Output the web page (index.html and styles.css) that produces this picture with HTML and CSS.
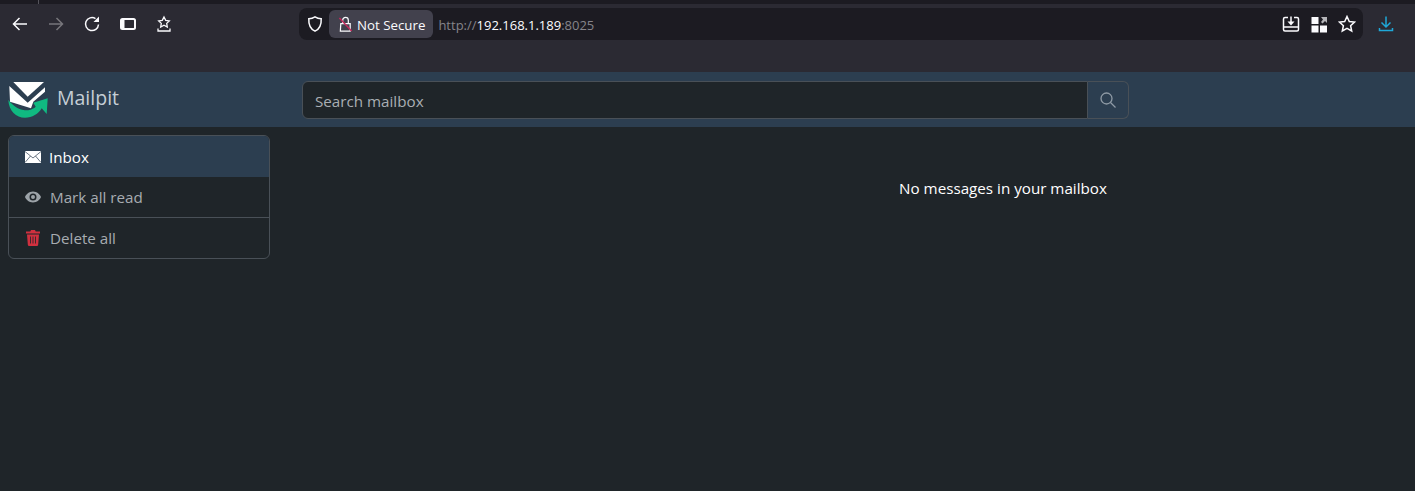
FILE: index.html
```html
<!DOCTYPE html>
<html lang="en">
<head>
    <meta charset="UTF-8">
    <meta name="viewport" content="width=device-width, initial-scale=1.0">
    <title>Mailpit</title>
    <link rel="stylesheet" href="styles.css">
</head>
<body>
    <div class="browser">
        <div class="tab-strip"><div class="tab-edge"></div></div>
        <div class="toolbar">
            <div class="nav-buttons">
                <svg class="tool-icon" viewBox="0 0 18 18"><path d="M16 9H2.500M8.500 3 2.500 9l6 6"/></svg>
                <svg class="tool-icon muted" viewBox="0 0 18 18"><path d="M2 9h13.500M9.500 3l6 6-6 6"/></svg>
                <svg class="tool-icon" viewBox="0 0 18 18"><path d="M15.500 9.500A6.500 6.500 0 1 1 12.500 3.600"/><path class="solid" d="M16 1.500V7h-5.500z"/></svg>
                <svg class="tool-icon thick" viewBox="0 0 18 18"><rect x="2" y="4" width="14" height="10" rx="1.500"/><path class="solid" d="M2 4.500h3.500v9H2z"/></svg>
                <svg class="tool-icon thin" viewBox="0 0 18 18"><path d="m9 2 1.700 3.400 3.600.5-2.600 2.500.6 3.600L9 10.200l-3.300 1.800.6-3.600L3.700 5.900l3.600-.5zM3 13.500V16h12v-2.500"/></svg>
            </div>
            <div class="address-bar">
                <svg class="tool-icon shield" viewBox="0 0 18 18"><path d="M9 1.800c2 1.300 4 1.800 6.200 1.900.3 5.600-1.500 10.200-6.200 12.500C4.300 13.900 2.500 9.300 2.800 3.700 5 3.600 7 3.100 9 1.800z"/></svg>
                <div class="security-chip">
                    <svg class="lock-icon" viewBox="0 0 16 18"><path d="M3 8h10v8H2.500zM5 8V4.500a3 3 0 0 1 6 0V8"/><path class="slash" d="M1.500 2 14.500 16"/></svg>
                    <span class="chip-text">Not Secure</span>
                </div>
                <div class="url"><span class="dim">http://</span>192.168.1.189<span class="dim">:8025</span></div>
                <div class="address-actions">
                    <svg class="tool-icon" viewBox="0 0 18 18"><path d="M6 2.500H3a1.500 1.500 0 0 0-1.500 1.500v10.500A1.500 1.500 0 0 0 3 16h12a1.500 1.500 0 0 0 1.500-1.500V4A1.500 1.500 0 0 0 15 2.500h-3M1.500 12h15M9 1.500v6"/><path class="solid" d="M5.500 6.500h7L9 10.500z"/></svg>
                    <svg class="tool-icon" viewBox="0 0 18 18"><path class="solid" d="M1.500 2h7v7h-7zM1.500 10.500h7v7h-7zM10 10.500h7v7h-7z"/><path class="dim-solid" d="M11 2h6v6l-2-2-2.500 2.500-1.500-1.500L13 4.500z"/></svg>
                    <svg class="tool-icon" viewBox="0 0 18 18"><path d="m9 1.500 2.300 5 5.200.6-3.900 3.600 1.100 5.300L9 13.300 4.300 16l1.100-5.300L1.500 7.100l5.200-.6z"/></svg>
                </div>
            </div>
            <svg class="tool-icon download" viewBox="0 0 18 18"><path d="M9 1.500v10M4.500 7.500 9 12l4.500-4.500M2.500 13v2.500h13V13"/></svg>
        </div>
    </div>

    <nav class="navbar">
        <div class="brand">
            <svg class="logo" viewBox="0 0 41 38">
                <path fill="#fff" d="M5.300 1H36L19.700 15.700z"/>
                <path fill="#fff" d="M1.300 5 19.700 21.700 37 6.300v4.400L25.300 20.700 23 27.300 2 20.700z"/>
                <path fill="#10b981" d="M.3 19c4 5 9 9 15 10 3.500.5 6.500.2 8.400-.7 2.200-1 3.600-2 4-2.600l-2.400-4 14.400-4.400-1 15.700-5-5.700c-3 5.500-9.700 9.400-16.700 9.400C8 36.700 1 30 .3 19z"/>
            </svg>
            <span class="brand-name">Mailpit</span>
        </div>
        <form class="search">
            <input class="search-input" type="text" placeholder="Search mailbox">
            <button class="search-btn" type="button">
                <svg viewBox="0 0 16 16"><circle cx="6.500" cy="6.500" r="5.500"/><path d="m10.500 10.500 5 5"/></svg>
            </button>
        </form>
    </nav>

    <div class="page">
        <aside class="side-menu">
            <a class="menu-item active">
                <svg class="menu-icon" viewBox="0 0 16 12"><rect width="16" height="12" fill="#fff"/><path fill="none" stroke="#2c3e50" stroke-width=".7" d="M0 .5 8 7l8-6.500M0 11.500 5.500 5M16 11.500 10.500 5"/></svg>
                Inbox
            </a>
            <a class="menu-item">
                <svg class="menu-icon" viewBox="0 0 16 12"><path fill="#9ca3a8" fill-rule="evenodd" d="M8 .5C12 .5 15 3.500 16 6c-1 2.500-4 5.500-8 5.500S1 8.500 0 6C1 3.500 4 .5 8 .5zm0 2a3.500 3.500 0 1 0 0 7 3.500 3.500 0 0 0 0-7zm0 1.500a2 2 0 1 1 0 4 2 2 0 0 1 0-4z"/></svg>
                <span class="menu-label">Mark all read</span>
            </a>
            <a class="menu-item divided">
                <svg class="menu-icon" viewBox="0 0 14 16"><path fill="#d0303f" fill-rule="evenodd" d="M5 0h4l.7 1.500H14v2H0v-2h4.300zM1 4.500h12l-.8 10a1.500 1.500 0 0 1-1.500 1.500H3.300a1.500 1.500 0 0 1-1.500-1.500zm3 2v7h.8v-7zm2.600 0v7h.8v-7zm2.600 0v7h.8v-7z"/></svg>
                <span class="menu-label">Delete all</span>
            </a>
        </aside>
        <main class="content">
            <p class="empty-text">No messages in your mailbox</p>
        </main>
    </div>
</body>
</html>
```

FILE: styles.css
```css
html, body {
    height: 100%;
}
body {
    margin: 0;
    background: #1f2529;
    color: #fff;
    font-family: "Open Sans", "Noto Sans", sans-serif;
    font-size: 15.2px;
    overflow: hidden;
}
svg {
    display: block;
}

/* browser chrome */
.browser {
    height: 72px;
    background: #2b2a33;
}
.tab-strip {
    height: 4px;
    background: #1c1b22;
}
.tab-edge {
    width: 38px;
    height: 4px;
    border-right: 1px solid #55545c;
}
.toolbar {
    display: flex;
    align-items: center;
    padding: 4px 20px 0 11px;
}
.nav-buttons {
    display: flex;
    gap: 18px;
    width: 288px;
}
.tool-icon {
    width: 18px;
    height: 18px;
    fill: none;
    stroke: #fbfbfe;
    stroke-width: 1.500;
}
.tool-icon.thick {
    stroke-width: 2;
}
.tool-icon.thin {
    stroke-width: 1.300;
}
.tool-icon .solid {
    fill: #fbfbfe;
    stroke: none;
}
.tool-icon .dim-solid {
    fill: #b5b5b9;
    stroke: none;
}
.tool-icon.muted {
    stroke: #77767c;
}
.address-bar {
    display: flex;
    align-items: center;
    flex: 1;
    height: 32px;
    padding: 0 7px;
    background: #1c1b22;
    border-radius: 8px;
}
.shield {
    margin-right: 5px;
}
.security-chip {
    display: flex;
    align-items: center;
    gap: 4px;
    height: 28px;
    padding: 0 8px 0 9px;
    background: #42414d;
    border-radius: 6px;
    font-size: 13.300px;
    color: #fbfbfe;
}
.chip-text {
    padding-top: 1px;
}
.lock-icon {
    width: 15px;
    height: 17px;
    fill: none;
    stroke: #fbfbfe;
    stroke-width: 1.300;
}
.lock-icon .slash {
    stroke: #c5285c;
    stroke-width: 1.500;
}
.url {
    margin-left: 5px;
    padding-top: 1px;
    font-size: 13px;
    color: #fbfbfe;
}
.dim {
    color: #85848a;
}
.address-actions {
    display: flex;
    gap: 10px;
    margin-left: auto;
}
.download {
    margin-left: 14px;
    stroke: #1fa8d8;
}

/* mailpit navbar */
.navbar {
    display: flex;
    align-items: center;
    height: 55px;
    background: #2c3e50;
}
.brand {
    display: flex;
    align-items: center;
    gap: 8px;
    width: 294px;
    padding-left: 8px;
    box-sizing: border-box;
    flex-shrink: 0;
    margin-right: 0;
}
.logo {
    width: 41px;
    height: 38px;
    flex-shrink: 0;
    margin-top: 1px;
}
.brand-name {
    font-size: 19.500px;
    color: #c5ced6;
    margin-top: -4px;
}
.brand {
    width: 302px;
}
.search {
    display: flex;
    width: 827px;
    height: 38px;
}
.search-input {
    flex: 1;
    min-width: 0;
    box-sizing: border-box;
    padding: 2px 12px 0;
    background: #1f2529;
    border: 1px solid #495057;
    border-radius: 6px 0 0 6px;
    color: #dee2e6;
    font: inherit;
}
.search-input::placeholder {
    color: #a9aeb3;
    opacity: 1;
}
.search-btn {
    width: 41px;
    padding: 0;
    display: flex;
    align-items: center;
    justify-content: center;
    background: transparent;
    border: 1px solid #495057;
    border-left: 0;
    border-radius: 0 6px 6px 0;
}
.search-btn svg {
    width: 16px;
    height: 16px;
    fill: none;
    stroke: #8f9aa5;
    stroke-width: 1.300;
}

/* page */
.page {
    display: flex;
    padding: 8px 0 0 8px;
}
.side-menu {
    display: flex;
    flex-direction: column;
    align-self: flex-start;
    width: 262px;
    box-sizing: border-box;
    border: 1px solid #495057;
    border-radius: 6px;
    overflow: hidden;
}
.menu-item {
    display: flex;
    align-items: center;
    gap: 8px;
    height: 40px;
    padding: 0 16px;
    color: #a7acb1;
}
.menu-item.active {
    height: 41px;
    background: #2c3e50;
    color: #fff;
}
.menu-item.divided {
    border-top: 1px solid #495057;
}
.menu-label {
    margin-left: 1px;
}
.menu-icon {
    width: 16px;
    height: 16px;
    flex-shrink: 0;
}
.content {
    flex: 1;
    padding-left: 321px;
    text-align: center;
}
.empty-text {
    margin: 43px 0 0;
}
```
